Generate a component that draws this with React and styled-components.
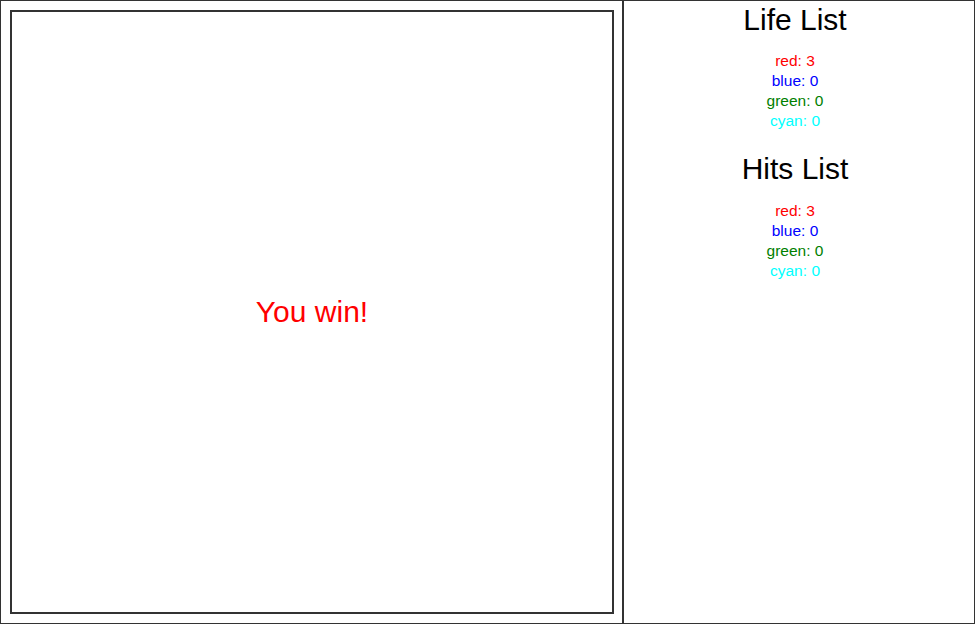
import styled, { createGlobalStyle } from "styled-components";

const GlobalStyle = createGlobalStyle`
  html, body {
    margin: 0;
    padding: 0;
    background: #fff;
    font-family: "Liberation Sans", Arial, sans-serif;
  }
`;

const Page = styled.div`
  display: flex;
  width: 975px;
  height: 624px;
`;

const GamePanel = styled.div`
  box-sizing: border-box;
  width: 623px;
  height: 624px;
  border: 1px solid #333;
  padding: 9px 8px 9px 9px;
`;

const Board = styled.div`
  box-sizing: border-box;
  width: 604px;
  height: 604px;
  border: 2px solid #333;
  display: flex;
  align-items: center;
  justify-content: center;
`;

const Message = styled.div`
  font-size: 30px;
  color: red;
`;

const Sidebar = styled.div`
  box-sizing: border-box;
  flex: 1;
  height: 624px;
  border: 1px solid #333;
  padding: 2px 8px 0 0;
  display: flex;
  flex-direction: column;
  align-items: center;
  text-align: center;
`;

const Title = styled.h2`
  margin: 0 0 ${(p) => p.$gap}px;
  font-size: 30px;
  font-weight: normal;
  line-height: 34px;
  color: #000;
`;

const List = styled.ul`
  list-style: none;
  margin: 0 0 21px;
  padding: 0;
`;

const Item = styled.li`
  font-size: 15.5px;
  line-height: 20px;
  color: ${(p) => p.$color};
`;

const colors = [
  { name: "red", color: "#ff0000" },
  { name: "blue", color: "#0000ff" },
  { name: "green", color: "#008000" },
  { name: "cyan", color: "#00ffff" },
];

const life = { red: 3, blue: 0, green: 0, cyan: 0 };
const hits = { red: 3, blue: 0, green: 0, cyan: 0 };

function CountList({ title, counts, gap }) {
  return (
    <>
      <Title $gap={gap}>{title}</Title>
      <List>
        {colors.map((c) => (
          <Item key={c.name} $color={c.color}>
            {c.name}: {counts[c.name]}
          </Item>
        ))}
      </List>
    </>
  );
}

export default function App() {
  return (
    <>
      <GlobalStyle />
      <Page>
        <GamePanel>
          <Board>
            <Message>You win!</Message>
          </Board>
        </GamePanel>
        <Sidebar>
          <CountList title="Life List" counts={life} gap={14} />
          <CountList title="Hits List" counts={hits} gap={15} />
        </Sidebar>
      </Page>
    </>
  );
}
